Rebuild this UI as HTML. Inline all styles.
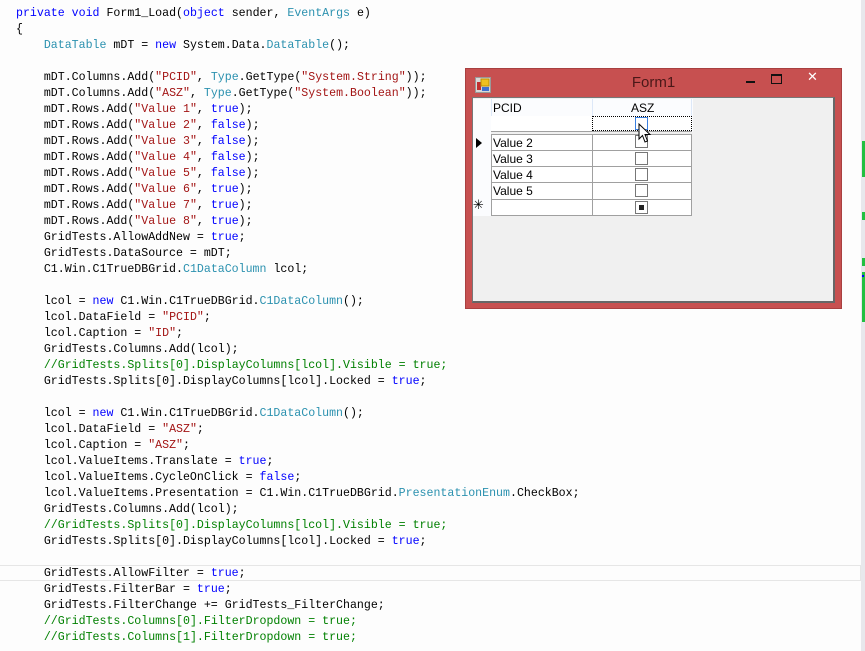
<!DOCTYPE html>
<html><head><meta charset="utf-8"><style>
html,body{margin:0;padding:0;width:865px;height:651px;overflow:hidden;background:#fdfdfd;position:relative}
.code{position:absolute;left:16px;top:6px;font-family:"Liberation Mono",monospace;font-size:11.6px;line-height:16px;white-space:pre;color:#000}
.k{color:#0000ff}.t{color:#2b91af}.s{color:#a31515}.c{color:#008000}
.hl{position:absolute;left:0;top:565px;width:860px;height:14px;border:1px solid #e6e6e6;border-left:none}
.abs{position:absolute}
.gut{position:absolute;left:861px;top:0;width:4px;height:651px;background:#e8e8ec}
.g{position:absolute;left:862px;width:3px;background:#22c040}
.win{position:absolute;left:465px;top:68px;width:375px;height:239px;background:#c75050;border:1px solid #a84040}
.title{position:absolute;left:0;width:375px;top:5px;text-align:center;font-family:"Liberation Sans",sans-serif;font-size:15px;color:#4a1818}
.client{position:absolute;left:6px;top:28px;width:360px;height:203px;background:#f0f0f0;border:1px solid #777;border-right:2px solid #666;border-bottom:2px solid #666}
.cell{position:absolute;font-family:"Liberation Sans",sans-serif;font-size:12px;color:#000;box-sizing:border-box}
.cb{position:absolute;width:13px;height:13px;border:1px solid #777;background:#fff;box-sizing:border-box}
</style></head><body>
<div class="hl"></div>
<div class="code"><span class="k">private</span> <span class="k">void</span> Form1_Load(<span class="k">object</span> sender, <span class="t">EventArgs</span> e)
{
    <span class="t">DataTable</span> mDT = <span class="k">new</span> System.Data.<span class="t">DataTable</span>();

    mDT.Columns.Add(<span class="s">"PCID"</span>, <span class="t">Type</span>.GetType(<span class="s">"System.String"</span>));
    mDT.Columns.Add(<span class="s">"ASZ"</span>, <span class="t">Type</span>.GetType(<span class="s">"System.Boolean"</span>));
    mDT.Rows.Add(<span class="s">"Value 1"</span>, <span class="k">true</span>);
    mDT.Rows.Add(<span class="s">"Value 2"</span>, <span class="k">false</span>);
    mDT.Rows.Add(<span class="s">"Value 3"</span>, <span class="k">false</span>);
    mDT.Rows.Add(<span class="s">"Value 4"</span>, <span class="k">false</span>);
    mDT.Rows.Add(<span class="s">"Value 5"</span>, <span class="k">false</span>);
    mDT.Rows.Add(<span class="s">"Value 6"</span>, <span class="k">true</span>);
    mDT.Rows.Add(<span class="s">"Value 7"</span>, <span class="k">true</span>);
    mDT.Rows.Add(<span class="s">"Value 8"</span>, <span class="k">true</span>);
    GridTests.AllowAddNew = <span class="k">true</span>;
    GridTests.DataSource = mDT;
    C1.Win.C1TrueDBGrid.<span class="t">C1DataColumn</span> lcol;

    lcol = <span class="k">new</span> C1.Win.C1TrueDBGrid.<span class="t">C1DataColumn</span>();
    lcol.DataField = <span class="s">"PCID"</span>;
    lcol.Caption = <span class="s">"ID"</span>;
    GridTests.Columns.Add(lcol);
    <span class="c">//GridTests.Splits[0].DisplayColumns[lcol].Visible = true;</span>
    GridTests.Splits[0].DisplayColumns[lcol].Locked = <span class="k">true</span>;

    lcol = <span class="k">new</span> C1.Win.C1TrueDBGrid.<span class="t">C1DataColumn</span>();
    lcol.DataField = <span class="s">"ASZ"</span>;
    lcol.Caption = <span class="s">"ASZ"</span>;
    lcol.ValueItems.Translate = <span class="k">true</span>;
    lcol.ValueItems.CycleOnClick = <span class="k">false</span>;
    lcol.ValueItems.Presentation = C1.Win.C1TrueDBGrid.<span class="t">PresentationEnum</span>.CheckBox;
    GridTests.Columns.Add(lcol);
    <span class="c">//GridTests.Splits[0].DisplayColumns[lcol].Visible = true;</span>
    GridTests.Splits[0].DisplayColumns[lcol].Locked = <span class="k">true</span>;

    GridTests.AllowFilter = <span class="k">true</span>;
    GridTests.FilterBar = <span class="k">true</span>;
    GridTests.FilterChange += GridTests_FilterChange;
    <span class="c">//GridTests.Columns[0].FilterDropdown = true;</span>
    <span class="c">//GridTests.Columns[1].FilterDropdown = true;</span></div>

<div class="gut"></div>
<div class="g" style="top:141px;height:36px"></div>
<div class="g" style="top:212px;height:8px"></div>
<div class="g" style="top:258px;height:8px"></div>
<div class="g" style="top:272px;height:50px"></div>
<div class="abs" style="left:862px;top:275px;width:2px;height:2px;background:#00f"></div>

<div class="win">
  <svg class="abs" style="left:9px;top:8px" width="16" height="16" viewBox="0 0 16 16">
    <rect x="0.5" y="0.5" width="15" height="15" fill="#d8d8d8" stroke="#999"/>
    <rect x="2" y="5" width="4" height="8" fill="#c03030"/>
    <rect x="6" y="2" width="8" height="7" fill="#f0c020" stroke="#c09000"/>
    <rect x="7" y="10" width="7" height="4" fill="#4070d0"/>
  </svg>
  <div class="title">Form1</div>
  <div class="abs" style="left:280px;top:12px;width:9px;height:2px;background:#111"></div>
  <div class="abs" style="left:305px;top:5px;width:9px;height:7px;border:1px solid #111;border-top-width:2px"></div>
  <div class="abs" style="left:341px;top:1px;font-family:'DejaVu Sans',sans-serif;font-size:13px;color:#fff">✕</div>
  <div class="client">
    <div class="abs" style="left:0;top:1px;width:18px;height:117px;background:#fbfcfe"></div>
    <div class="abs" style="left:18px;top:1px;width:201px;height:33px;background:#fbfcfe;border-left:1px solid #dde8f8"></div>
    <div class="abs" style="left:119px;top:1px;width:1px;height:17px;background:#dde8f8"></div>
    <div class="abs" style="left:218px;top:1px;width:1px;height:17px;background:#dde8f8"></div>
    <div class="cell" style="left:20px;top:3px">PCID</div>
    <div class="cell" style="left:158px;top:3px">ASZ</div>
    <div class="abs" style="left:18px;top:18px;width:101px;height:15px;background:#fff"></div>
    <div class="abs" style="left:119px;top:18px;width:100px;height:15px;border:1px dotted #000;box-sizing:border-box;background:#fff"></div>
    <div class="cb" style="left:162px;top:19px;border-color:#3a80e0"></div>
    <div class="abs" style="left:18px;top:33px;width:201px;height:1px;background:#a0a0a0"></div>
    <div class="abs" style="left:18px;top:36px;width:201px;height:82px;background:#fff;border:1px solid #a0a0a0;box-sizing:border-box"></div>
    <div class="abs" style="left:119px;top:36px;width:1px;height:82px;background:#a0a0a0"></div>
    <div class="abs" style="left:18px;top:52px;width:201px;height:1px;background:#a0a0a0"></div>
    <div class="abs" style="left:18px;top:68px;width:201px;height:1px;background:#a0a0a0"></div>
    <div class="abs" style="left:18px;top:84px;width:201px;height:1px;background:#a0a0a0"></div>
    <div class="abs" style="left:18px;top:101px;width:201px;height:1px;background:#a0a0a0"></div>
    <div class="cell" style="left:20px;top:38px">Value 2</div>
    <div class="cell" style="left:20px;top:54px">Value 3</div>
    <div class="cell" style="left:20px;top:70px">Value 4</div>
    <div class="cell" style="left:20px;top:86px">Value 5</div>
    <div class="cb" style="left:162px;top:37px"></div>
    <div class="cb" style="left:162px;top:54px"></div>
    <div class="cb" style="left:162px;top:70px"></div>
    <div class="cb" style="left:162px;top:86px"></div>
    <div class="cb" style="left:162px;top:103px"></div>
    <div class="abs" style="left:166px;top:107px;width:5px;height:5px;background:#222"></div>
    <svg class="abs" style="left:2px;top:39px" width="8" height="12"><path d="M1 1 L7 6 L1 11 Z" fill="#000"/></svg>
    <div class="abs" style="left:0px;top:101px;font-size:13px;font-family:'DejaVu Sans',sans-serif;line-height:14px">✳</div>
    <svg class="abs" style="left:165px;top:25px" width="14" height="22" viewBox="0 0 14 22"><path d="M1 1 L1 16 L4.5 12.5 L7 19 L9.5 18 L7 11.5 L12 11.5 Z" fill="#fff" stroke="#000" stroke-width="1"/></svg>
  </div>
</div>
</body></html>
